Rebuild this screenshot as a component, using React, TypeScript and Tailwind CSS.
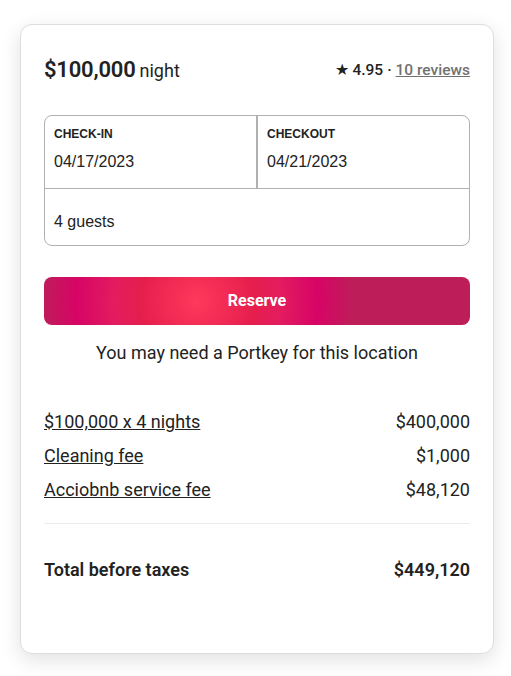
import React from "react";

export default function App() {
  const fees = [
    ["$100,000 x 4 nights", "$400,000"],
    ["Cleaning fee", "$1,000"],
    ["Acciobnb service fee", "$48,120"],
  ];
  return (
    <div className="min-h-[676px] w-[511px] bg-white pt-[24px] pl-[20px] font-['Roboto',sans-serif] text-[#222222]">
      <div className="w-[474px] h-[630px] rounded-[12px] border border-[#dddddd] bg-white px-[23px] pt-[23px] shadow-[0_6px_20px_rgba(0,0,0,0.12)]">
        <div className="flex h-[44px] items-center justify-between">
          <div className="flex items-baseline">
            <span className="text-[22px] font-semibold leading-[26px] tracking-[-0.2px]">$100,000</span>
            <span className="ml-[4px] text-[18px] leading-[22px]">night</span>
          </div>
          <div className="flex items-center text-[15.5px] font-medium leading-[18px]">
            <span>★ 4.95</span>
            <span className="mx-[4px]">·</span>
            <span className="text-[#717171] underline">10 reviews</span>
          </div>
        </div>

        <div className="mt-[23px] rounded-[8px] border border-[#b0b0b0] font-['Liberation_Sans',Arial,sans-serif]">
          <div className="flex h-[72px]">
            <div className="flex-1 border-r-2 border-[#b0b0b0] px-[9px] pt-[10px]">
              <div className="text-[12px] font-bold leading-[16px]">CHECK-IN</div>
              <div className="mt-[10px] text-[16px] leading-[20px]">04/17/2023</div>
            </div>
            <div className="flex-1 px-[9px] pt-[10px]">
              <div className="text-[12px] font-bold leading-[16px]">CHECKOUT</div>
              <div className="mt-[10px] text-[16px] leading-[20px]">04/21/2023</div>
            </div>
          </div>
          <div className="h-[57px] border-t border-[#b0b0b0] px-[9px] pt-[23px] text-[16px] leading-[20px]">
            4 guests
          </div>
        </div>

        <button className="mt-[31px] flex h-[48px] w-full items-center justify-center rounded-[8px] bg-[radial-gradient(circle_210px_at_153px_50%,#FF385C_0%,#E61E4D_27.5%,#E31C5F_40%,#D70466_57.5%,#BD1E59_75%,#BD1E59_100%)] text-[16px] font-bold text-white">
          Reserve
        </button>

        <div className="mt-[17px] text-center text-[18px] leading-[22px]">
          You may need a Portkey for this location
        </div>

        <div className="mt-[47px] flex flex-col gap-[12px]">
          {fees.map(([l, r]) => (
            <div key={l} className="flex justify-between text-[18px] leading-[22px]">
              <span className="underline">{l}</span>
              <span>{r}</span>
            </div>
          ))}
        </div>

        <div className="mt-[22px] border-t border-[#ebebeb]" />

        <div className="mt-[35px] flex justify-between text-[18px] font-semibold leading-[22px]">
          <span>Total before taxes</span>
          <span>$449,120</span>
        </div>
      </div>
    </div>
  );
}
